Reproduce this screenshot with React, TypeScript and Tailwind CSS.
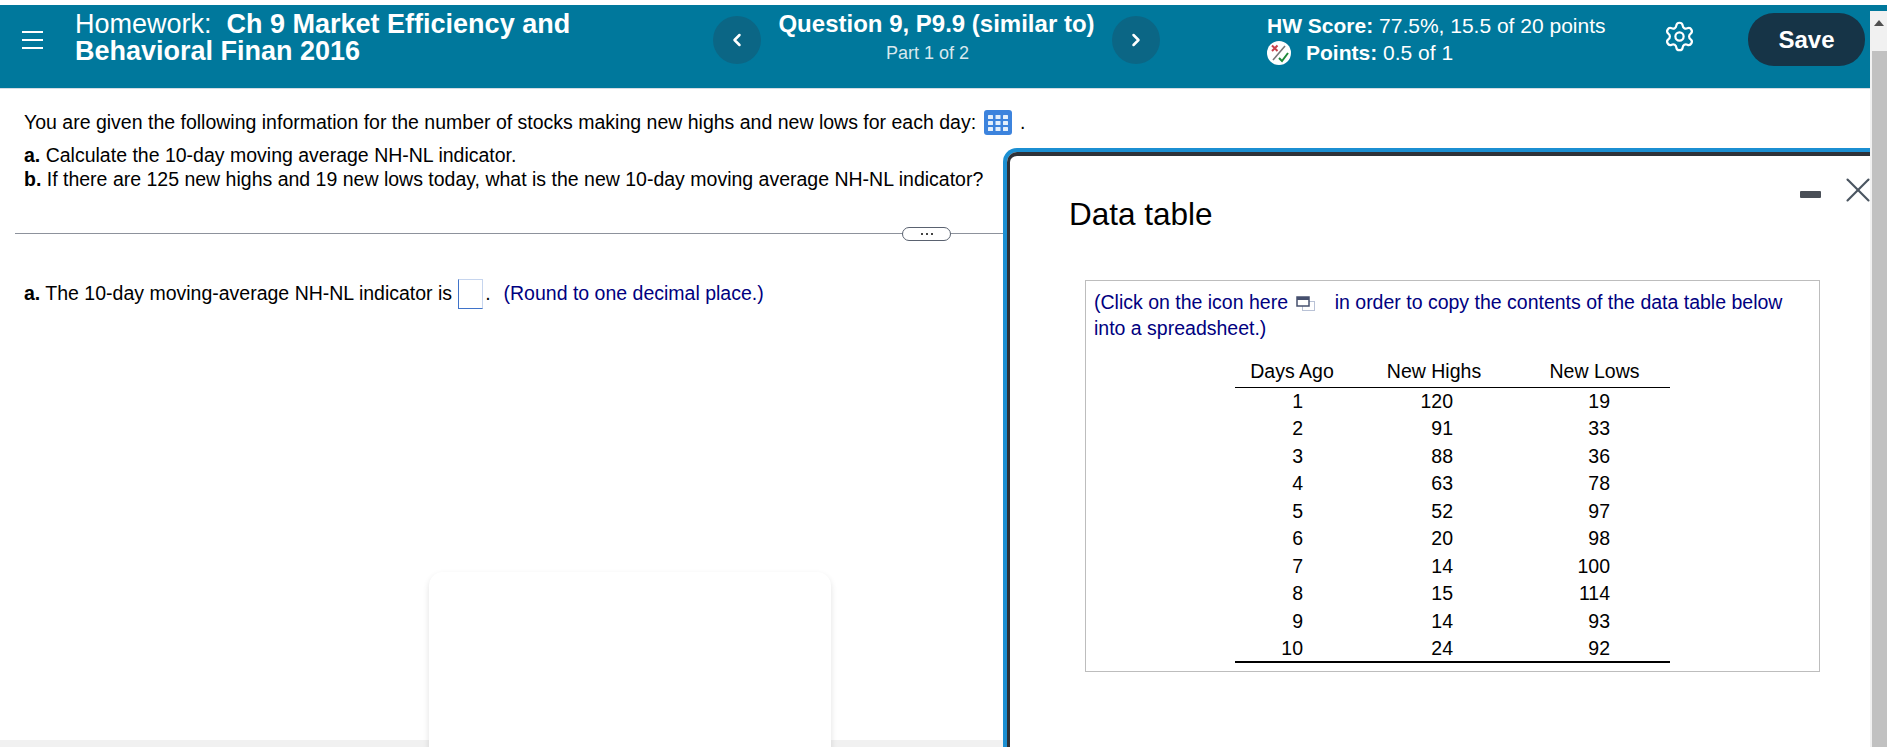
import { ChevronLeft, ChevronRight, Settings, X } from 'lucide-react';

const rows = [
  ['1', '120', '19'],
  ['2', '91', '33'],
  ['3', '88', '36'],
  ['4', '63', '78'],
  ['5', '52', '97'],
  ['6', '20', '98'],
  ['7', '14', '100'],
  ['8', '15', '114'],
  ['9', '14', '93'],
  ['10', '24', '92'],
];

function TableIcon() {
  return (
    <svg width="28" height="25" viewBox="0 0 28 25" className="inline-block shrink-0 align-middle">
      <rect width="28" height="25" rx="3" fill="#3c83dd" />
      {[5, 11, 17].map((y) =>
        [4, 11.5, 19].map((x) => <rect key={`${x}-${y}`} x={x} y={y} width="5" height="4" rx="0.5" fill="#e4effb" />),
      )}
    </svg>
  );
}

function ScoreIcon() {
  return (
    <svg width="24" height="24" viewBox="0 0 24 24" className="shrink-0">
      <circle cx="12" cy="12" r="12" fill="#fff" />
      <path d="M5 4.5l5.5 5.5M10.5 4.5L5 10" stroke="#c8414b" strokeWidth="2" />
      <path d="M6 19L18 5" stroke="#777" strokeWidth="1.6" />
      <path d="M12 17l3 3 6-8" stroke="#1f8a3a" strokeWidth="2" fill="none" />
    </svg>
  );
}

function CopyIcon() {
  return (
    <svg width="19" height="15" viewBox="0 0 19 15" className="ml-[3px] mr-[3px] inline-block">
      <rect x="6.5" y="5.5" width="12" height="9" fill="#fff" stroke="#b9c2d6" />
      <rect x="1" y="1" width="12" height="9" fill="#fff" stroke="#46506e" strokeWidth="1.5" />
      <rect x="1" y="1" width="12" height="3" fill="#46506e" />
    </svg>
  );
}

function Header() {
  return (
    <header className="flex h-[84px] border-b border-[#d4dbe3] bg-[#00789c] text-white">
      <div className="flex h-[70px] w-[75px] shrink-0 flex-col justify-center gap-[6px] pl-[22px]">
        <span className="h-[2px] w-[21px] bg-white" />
        <span className="h-[2px] w-[21px] bg-white" />
        <span className="h-[2px] w-[21px] bg-white" />
      </div>
      <div className="w-[638px] shrink-0 pt-[6px] text-[27px] leading-[27px]">
        Homework:&nbsp; <b>Ch 9 Market Efficiency and</b>
        <br />
        <b>Behavioral Finan 2016</b>
      </div>
      <button className="mt-[11px] flex h-[48px] w-[48px] shrink-0 items-center justify-center rounded-full bg-[#0b6685]">
        <ChevronLeft size={20} strokeWidth={3} />
      </button>
      <div className="w-[351px] shrink-0 pt-[4px] text-center">
        <div className="text-[24px] leading-[30px] font-bold">Question 9, P9.9 (similar to)</div>
        <div className="pt-[2px] pr-[18px] text-[18px] leading-[24px] text-[#d8e8ee]">Part 1 of 2</div>
      </div>
      <button className="mt-[11px] flex h-[48px] w-[48px] shrink-0 items-center justify-center rounded-full bg-[#0b6685]">
        <ChevronRight size={20} strokeWidth={3} />
      </button>
      <div className="ml-[107px] w-[396px] shrink-0 pt-[7px] text-[21px] leading-[27px]">
        <div>
          <b>HW Score:</b> 77.5%, 15.5 of 20 points
        </div>
        <div className="flex items-center gap-[15px]">
          <ScoreIcon />
          <span>
            <b>Points:</b> 0.5 of 1
          </span>
        </div>
      </div>
      <Settings size={33} strokeWidth={1.6} className="mt-[15px] shrink-0" />
      <button className="mt-[8px] ml-[52px] h-[53px] w-[117px] shrink-0 rounded-[26px] bg-[#163447] text-[24px] font-bold">
        Save
      </button>
    </header>
  );
}

function Question() {
  return (
    <main className="w-[1003px] flex-1 pl-[24px] text-[19.5px] text-black">
      <p className="mt-[19px] flex h-[29px] items-center gap-[8px] whitespace-nowrap">
        You are given the following information for the number of stocks making new highs and new lows for each day:
        <TableIcon />.
      </p>
      <p className="mt-[6px] leading-[24px]">
        <b>a.</b> Calculate the 10-day moving average NH-NL indicator.
        <br />
        <b>b.</b> If there are 125 new highs and 19 new lows today, what is the new 10-day moving average NH-NL indicator?
      </p>
      <div className="relative mt-[42px] -ml-[9px] h-[1px] bg-[#8d929c]">
        <span className="absolute top-[-6px] left-[887px] flex h-[14px] w-[49px] items-center justify-center gap-[3px] rounded-full border border-[#5a6270] bg-white">
          <i className="h-[2px] w-[2px] bg-[#444]" />
          <i className="h-[2px] w-[2px] bg-[#444]" />
          <i className="h-[2px] w-[2px] bg-[#444]" />
        </span>
      </div>
      <p className="mt-[45px] flex h-[29px] items-center whitespace-nowrap">
        <span>
          <b>a.</b> The 10-day moving-average NH-NL indicator is
        </span>
        <span className="mr-[2px] ml-[6px] h-[30px] w-[25px] border border-[#3f73c9] border-t-[#c6d5ee] border-r-[#c6d5ee]" />
        <span>.</span>
        <span className="ml-[13px] text-[#000080]">(Round to one decimal place.)</span>
      </p>
    </main>
  );
}

function DataTable() {
  return (
    <div className="absolute top-[148px] left-[1003px] h-[620px] w-[880px] rounded-tl-[14px] border-t-[4px] border-l-[4px] border-[#1b8fd2]">
      <div className="h-full rounded-tl-[10px] border-t-[4px] border-l-[3px] border-[#2e3238] bg-white pt-[38px] pl-[59px]">
        <div className="absolute top-[17px] left-[793px] flex items-center gap-[16px]">
          <span className="mt-[9px] h-[7px] w-[21px] rounded-[1px] bg-[#4a4f57]" />
          <X size={42} strokeWidth={1.2} className="text-[#4a5560]" />
        </div>
        <h2 className="text-[31.5px] leading-[40px] text-black">Data table</h2>
        <div className="mt-[46px] ml-[16px] h-[392px] w-[735px] border border-[#bdbdbd] pt-[8px] pl-[8px]">
          <p className="text-[19.5px] leading-[26px] text-[#000080]">
            (Click on the icon here <CopyIcon /> &nbsp;&nbsp;in order to copy the contents of the data table below
            <br />
            into a spreadsheet.)
          </p>
          <table className="mt-[15px] ml-[141px] w-[435px] table-fixed text-[19.5px] text-black">
            <thead>
              <tr className="h-[31px] border-b border-black leading-[24px] font-normal">
                <th className="w-[114px] font-normal">Days Ago</th>
                <th className="w-[170px] font-normal">New Highs</th>
                <th className="w-[151px] font-normal">New Lows</th>
              </tr>
            </thead>
            <tbody className="border-b-2 border-black">
              {rows.map((r) => (
                <tr key={r[0]} className="h-[27px] leading-[24px] even:h-[28px]">
                  <td className="pr-[46px] text-right">{r[0]}</td>
                  <td className="pr-[66px] text-right">{r[1]}</td>
                  <td className="pr-[60px] text-right">{r[2]}</td>
                </tr>
              ))}
            </tbody>
          </table>
        </div>
      </div>
    </div>
  );
}

export default function App() {
  return (
    <div className="relative flex h-[747px] flex-col overflow-hidden bg-white pt-[5px] font-['Liberation_Sans',Arial,sans-serif]">
      <Header />
      <Question />
      <div className="h-[7px] w-[1003px] bg-[#f1f1f1]" />
      <div className="absolute top-[572px] left-[429px] h-[190px] w-[402px] rounded-[14px] bg-white shadow-[0_3px_6px_rgba(0,0,0,0.12)]" />
      <DataTable />
      <div className="absolute top-[11px] right-0 flex h-[736px] w-[17px] flex-col bg-[#f1f1f1]">
        <div className="flex h-[40px] justify-center pt-[9px]">
          <span className="h-0 w-0 border-x-[5px] border-b-[6px] border-x-transparent border-b-[#505050]" />
        </div>
        <div className="ml-[2px] flex-1 bg-[#c1c1c1]" />
      </div>
    </div>
  );
}
